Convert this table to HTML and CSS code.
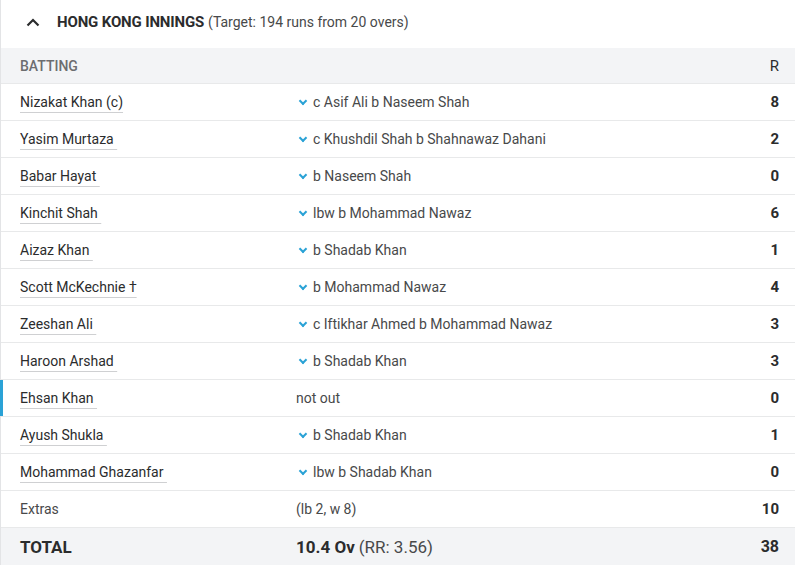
FILE: index.html
```html
<!DOCTYPE html>
<html>
<head>
<meta charset="utf-8">
<link rel="stylesheet" href="styles.css">
</head>
<body>
<div class="card">
  <div class="title">
    <svg class="up" width="14" height="9" viewBox="0 0 14 9"><path d="M1.5 7.5 L7 2 L12.5 7.5" fill="none" stroke="#2b2c2d" stroke-width="2.2"/></svg>
    <span class="t-bold">HONG KONG INNINGS</span><span class="t-sub">(Target: 194 runs from 20 overs)</span>
  </div>
  <div class="row head">
    <div class="c-name">BATTING</div>
    <div class="c-dis"></div>
    <div class="c-r">R</div>
  </div>
  <div class="row"><div class="c-name"><a>Nizakat Khan (c)</a></div><div class="c-dis"><span class="chev"></span>c Asif Ali b Naseem Shah</div><div class="c-r">8</div></div>
  <div class="row"><div class="c-name"><a>Yasim Murtaza&nbsp;</a></div><div class="c-dis"><span class="chev"></span>c Khushdil Shah b Shahnawaz Dahani</div><div class="c-r">2</div></div>
  <div class="row"><div class="c-name"><a>Babar Hayat&nbsp;</a></div><div class="c-dis"><span class="chev"></span>b Naseem Shah</div><div class="c-r">0</div></div>
  <div class="row"><div class="c-name"><a>Kinchit Shah&nbsp;</a></div><div class="c-dis"><span class="chev"></span>lbw b Mohammad Nawaz</div><div class="c-r">6</div></div>
  <div class="row"><div class="c-name"><a>Aizaz Khan&nbsp;</a></div><div class="c-dis"><span class="chev"></span>b Shadab Khan</div><div class="c-r">1</div></div>
  <div class="row"><div class="c-name"><a>Scott McKechnie †</a></div><div class="c-dis"><span class="chev"></span>b Mohammad Nawaz</div><div class="c-r">4</div></div>
  <div class="row"><div class="c-name"><a>Zeeshan Ali&nbsp;</a></div><div class="c-dis"><span class="chev"></span>c Iftikhar Ahmed b Mohammad Nawaz</div><div class="c-r">3</div></div>
  <div class="row"><div class="c-name"><a>Haroon Arshad&nbsp;</a></div><div class="c-dis"><span class="chev"></span>b Shadab Khan</div><div class="c-r">3</div></div>
  <div class="row active"><div class="c-name"><a>Ehsan Khan&nbsp;</a></div><div class="c-dis">not out</div><div class="c-r">0</div></div>
  <div class="row"><div class="c-name"><a>Ayush Shukla&nbsp;</a></div><div class="c-dis"><span class="chev"></span>b Shadab Khan</div><div class="c-r">1</div></div>
  <div class="row"><div class="c-name"><a>Mohammad Ghazanfar&nbsp;</a></div><div class="c-dis"><span class="chev"></span>lbw b Shadab Khan</div><div class="c-r">0</div></div>
  <div class="row extras"><div class="c-name">Extras</div><div class="c-dis">(lb 2, w 8)</div><div class="c-r">10</div></div>
  <div class="row total"><div class="c-name">TOTAL</div><div class="c-dis"><b>10.4 Ov</b> (RR: 3.56)</div><div class="c-r">38</div></div>
</div>
</body>
</html>
```
FILE: styles.css
```css
* { box-sizing: border-box; }
html, body { margin: 0; padding: 0; background: #fff; }
body { font-family: Roboto, "Liberation Sans", sans-serif; color: #2b2c2d; }
.card { width: 795px; border-left: 1px solid #e3e4e6; }
.title { height: 48px; display: flex; align-items: center; padding-left: 25px; padding-bottom: 4px; font-size: 15px; }
.up { margin-right: 17px; }
.t-bold { font-weight: 700; color: #2b2c2d; letter-spacing: -0.15px; }
.t-sub { color: #48494a; margin-left: 4px; font-size: 14px; }
.row { display: grid; grid-template-columns: 276px 1fr 60px; align-items: center; height: 37px; border-top: 1px solid #e8e9ea; padding-left: 19px; padding-right: 16px; font-size: 14px; position: relative; }
.row.head { height: 35px; background: #f3f4f6; border-top: none; color: #6c6d6f; font-size: 14px; font-weight: 500; }
.head .c-r { font-weight: 400; }
.c-name a { color: #2b2c2d; font-size: 14px; font-weight: 400; text-decoration: underline; text-decoration-color: #cfd0d2; text-underline-offset: 5px; text-decoration-thickness: 1px; }
.c-dis { color: #48494a; display: flex; align-items: center; }
.chev { width: 6px; height: 6px; border-right: 2px solid #2aa2d6; border-bottom: 2px solid #2aa2d6; transform: rotate(45deg); margin: -3px 7px 0 4px; }
.c-r { text-align: right; font-weight: 700; color: #2b2c2d; font-size: 15px; }
.active::before { content: ""; position: absolute; left: -1px; top: 0; bottom: 0; width: 3px; background: #2aa2d6; }
.extras .c-name { color: #48494a; }
.total { height: 38px; background: #f3f4f6; font-size: 17px; }
.total .c-name { font-weight: 700; }
.total .c-r { font-size: 16px; }
.total .c-dis b { font-weight: 700; color: #2b2c2d; margin-right: 4px; }
```
